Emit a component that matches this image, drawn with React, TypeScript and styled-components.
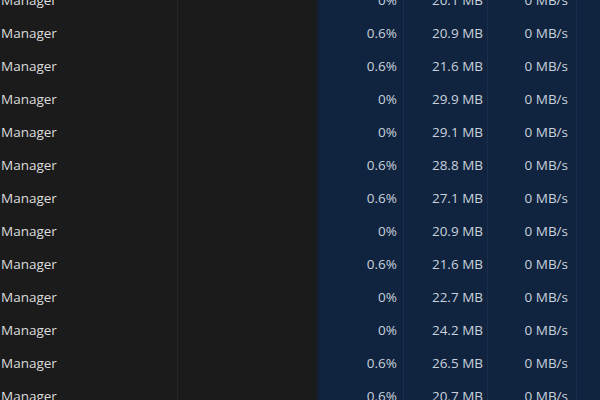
import React from "react";
import styled, { createGlobalStyle } from "styled-components";

const Global = createGlobalStyle`
  html, body { margin: 0; padding: 0; background: #1b1b1b; overflow: hidden; }
  body { width: 600px; height: 400px; }
`;

const Table = styled.div`
  width: 600px;
  height: 400px;
  overflow: hidden;
  background: #1b1b1b;
  font-family: "Open Sans", "Noto Sans", sans-serif;
  font-size: 13.5px;
`;

const Rows = styled.div`
  margin-top: -17px;
  display: flex;
  flex-direction: column;
`;

const Row = styled.div`
  display: grid;
  grid-template-columns: 178px 138px 88px 84px 89px 23px;
  height: 33px;
  align-items: stretch;
`;

const NameCell = styled.div`
  display: flex;
  align-items: center;
  padding-left: 1px;
  color: #dcdcdc;
  border-right: 1px solid #262626;
  white-space: nowrap;
`;

const StatusCell = styled.div`
  background: #1b1b1b;
`;

const NumCell = styled.div<{ $pad?: number }>`
  display: flex;
  align-items: center;
  justify-content: flex-end;
  padding-right: ${(p) => p.$pad ?? 8}px;
  color: #c9d1dc;
  background: #10243f;
  border-right: 1px solid #1a2f4d;
  white-space: nowrap;
`;

const FirstNum = styled(NumCell)`
  background: linear-gradient(to right, #171d27 0px, #10243f 5px);
`;

const Tail = styled.div`
  background: #10243f;
`;

const data: [string, string][] = [
  ["0%", "20.1 MB"],
  ["0.6%", "20.9 MB"],
  ["0.6%", "21.6 MB"],
  ["0%", "29.9 MB"],
  ["0%", "29.1 MB"],
  ["0.6%", "28.8 MB"],
  ["0.6%", "27.1 MB"],
  ["0%", "20.9 MB"],
  ["0.6%", "21.6 MB"],
  ["0%", "22.7 MB"],
  ["0%", "24.2 MB"],
  ["0.6%", "26.5 MB"],
  ["0.6%", "20.7 MB"],
];

export default function App() {
  return (
    <>
      <Global />
      <Table>
        <Rows>
          {data.map(([cpu, mem], i) => (
            <Row key={i}>
              <NameCell>Manager</NameCell>
              <StatusCell />
              <FirstNum $pad={6}>{cpu}</FirstNum>
              <NumCell $pad={4}>{mem}</NumCell>
              <NumCell $pad={8}>0 MB/s</NumCell>
              <Tail />
            </Row>
          ))}
        </Rows>
      </Table>
    </>
  );
}
